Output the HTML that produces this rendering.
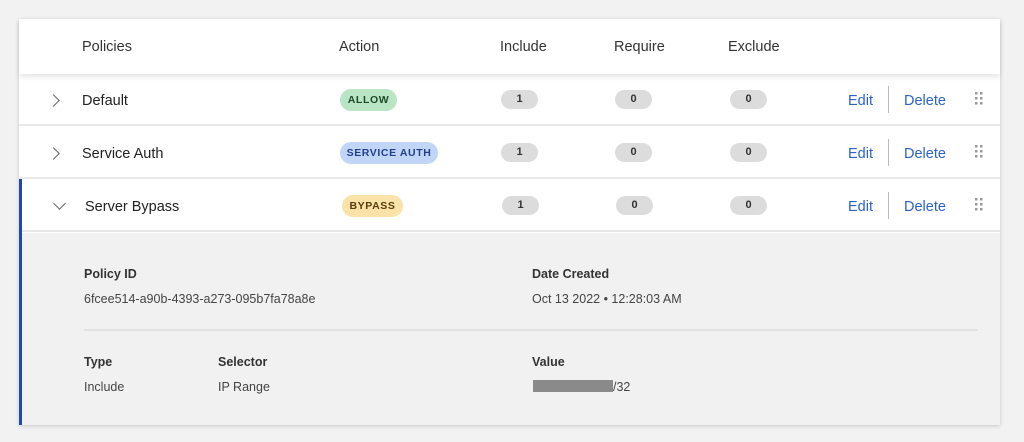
<!DOCTYPE html>
<html><head><style>
*{margin:0;padding:0;box-sizing:border-box}
body{width:1024px;height:442px;background:#f2f2f2;font-family:"Liberation Sans",sans-serif;position:relative;overflow:hidden;color:#222}
.a{position:absolute}
.card{left:19px;top:19px;width:981px;height:406px;background:#fff;box-shadow:0 1px 4px rgba(0,0,0,.18)}
.hdr{left:19px;top:19px;width:981px;height:55px;background:#fff;box-shadow:0 3px 5px rgba(0,0,0,.1);z-index:2}
.h{font-size:14.5px;color:#333;top:39px}
.row{left:19px;width:981px;height:52px;background:#fff;border-bottom:2px solid #e8e8e8}
.name{font-size:14.5px;color:#222}
.badge{height:22px;border-radius:11px;font-size:10.5px;font-weight:bold;letter-spacing:.6px;line-height:22px;text-align:center}
.pill{height:19px;width:37px;border-radius:10px;background:#dcdcdc;font-size:11px;font-weight:bold;text-align:center;line-height:19px;color:#333}
.lnk{font-size:14.5px;color:#2c62c9}
.sep{width:1px;height:27px;background:#bbb}
.chev{width:9px;height:9px;border-right:1.2px solid #666;border-bottom:1.2px solid #666}
.lbl{font-size:12.5px;font-weight:bold;color:#333}
.val{font-size:12.5px;color:#444}
</style></head><body>
<div class="a card"></div>
<div class="a hdr"></div>
<div class="a h" style="left:82px;z-index:3">Policies</div>
<div class="a h" style="left:339px;z-index:3">Action</div>
<div class="a h" style="left:500px;z-index:3">Include</div>
<div class="a h" style="left:614px;z-index:3">Require</div>
<div class="a h" style="left:728px;z-index:3">Exclude</div>

<div class="a row" style="top:74px"></div>
<div class="a row" style="top:127px"></div>
<div class="a row" style="top:180px"></div>
<div class="a" style="left:19px;top:233px;width:981px;height:192px;background:#f1f1f1"></div>
<div class="a" style="left:19px;top:179px;width:3px;height:246px;background:#1f4aa8"></div>

<div class="a chev" style="left:49px;top:96px;transform:rotate(-45deg)"></div>
<div class="a chev" style="left:49px;top:149px;transform:rotate(-45deg)"></div>
<div class="a chev" style="left:55px;top:199px;transform:rotate(45deg)"></div>

<div class="a name" style="left:82px;top:93px">Default</div>
<div class="a name" style="left:82px;top:146px">Service Auth</div>
<div class="a name" style="left:85px;top:199px">Server Bypass</div>

<div class="a badge" style="left:340px;top:89px;width:57px;background:#b9e5c4;color:#1d4a2a">ALLOW</div>
<div class="a badge" style="left:340px;top:142px;width:98px;background:#c1d6f7;color:#1f3f8c">SERVICE AUTH</div>
<div class="a badge" style="left:342px;top:195px;width:61px;background:#f9e3a8;color:#5a3b0b">BYPASS</div>

<div class="a pill" style="left:501px;top:90px">1</div>
<div class="a pill" style="left:615px;top:90px">0</div>
<div class="a pill" style="left:730px;top:90px">0</div>
<div class="a pill" style="left:501px;top:143px">1</div>
<div class="a pill" style="left:615px;top:143px">0</div>
<div class="a pill" style="left:730px;top:143px">0</div>
<div class="a pill" style="left:502px;top:196px">1</div>
<div class="a pill" style="left:616px;top:196px">0</div>
<div class="a pill" style="left:730px;top:196px">0</div>

<div class="a lnk" style="left:848px;top:93px">Edit</div><div class="a sep" style="left:888px;top:86px"></div><div class="a lnk" style="left:904px;top:93px">Delete</div>
<div class="a lnk" style="left:848px;top:146px">Edit</div><div class="a sep" style="left:888px;top:139px"></div><div class="a lnk" style="left:904px;top:146px">Delete</div>
<div class="a lnk" style="left:848px;top:199px">Edit</div><div class="a sep" style="left:888px;top:192px"></div><div class="a lnk" style="left:904px;top:199px">Delete</div>

<svg class="a" style="left:975px;top:92px" width="8" height="14"><g fill="#999"><rect x="0" y="0" width="2.5" height="2.5"/><rect x="5" y="0" width="2.5" height="2.5"/><rect x="0" y="5" width="2.5" height="2.5"/><rect x="5" y="5" width="2.5" height="2.5"/><rect x="0" y="10" width="2.5" height="2.5"/><rect x="5" y="10" width="2.5" height="2.5"/></g></svg>
<svg class="a" style="left:975px;top:145px" width="8" height="14"><g fill="#999"><rect x="0" y="0" width="2.5" height="2.5"/><rect x="5" y="0" width="2.5" height="2.5"/><rect x="0" y="5" width="2.5" height="2.5"/><rect x="5" y="5" width="2.5" height="2.5"/><rect x="0" y="10" width="2.5" height="2.5"/><rect x="5" y="10" width="2.5" height="2.5"/></g></svg>
<svg class="a" style="left:975px;top:198px" width="8" height="14"><g fill="#999"><rect x="0" y="0" width="2.5" height="2.5"/><rect x="5" y="0" width="2.5" height="2.5"/><rect x="0" y="5" width="2.5" height="2.5"/><rect x="5" y="5" width="2.5" height="2.5"/><rect x="0" y="10" width="2.5" height="2.5"/><rect x="5" y="10" width="2.5" height="2.5"/></g></svg>

<div class="a lbl" style="left:84px;top:267px">Policy ID</div>
<div class="a val" style="left:84px;top:292px">6fcee514-a90b-4393-a273-095b7fa78a8e</div>
<div class="a lbl" style="left:532px;top:267px">Date Created</div>
<div class="a val" style="left:532px;top:292px">Oct 13 2022 • 12:28:03 AM</div>
<div class="a" style="left:84px;top:329px;width:894px;height:2px;background:#e2e2e2"></div>
<div class="a lbl" style="left:84px;top:355px">Type</div>
<div class="a val" style="left:84px;top:380px">Include</div>
<div class="a lbl" style="left:218px;top:355px">Selector</div>
<div class="a val" style="left:218px;top:380px">IP Range</div>
<div class="a lbl" style="left:532px;top:355px">Value</div>
<div class="a" style="left:533px;top:380px;width:80px;height:12px;background:#8a8a8a"></div>
<div class="a val" style="left:613px;top:380px">/32</div>
</body></html>
